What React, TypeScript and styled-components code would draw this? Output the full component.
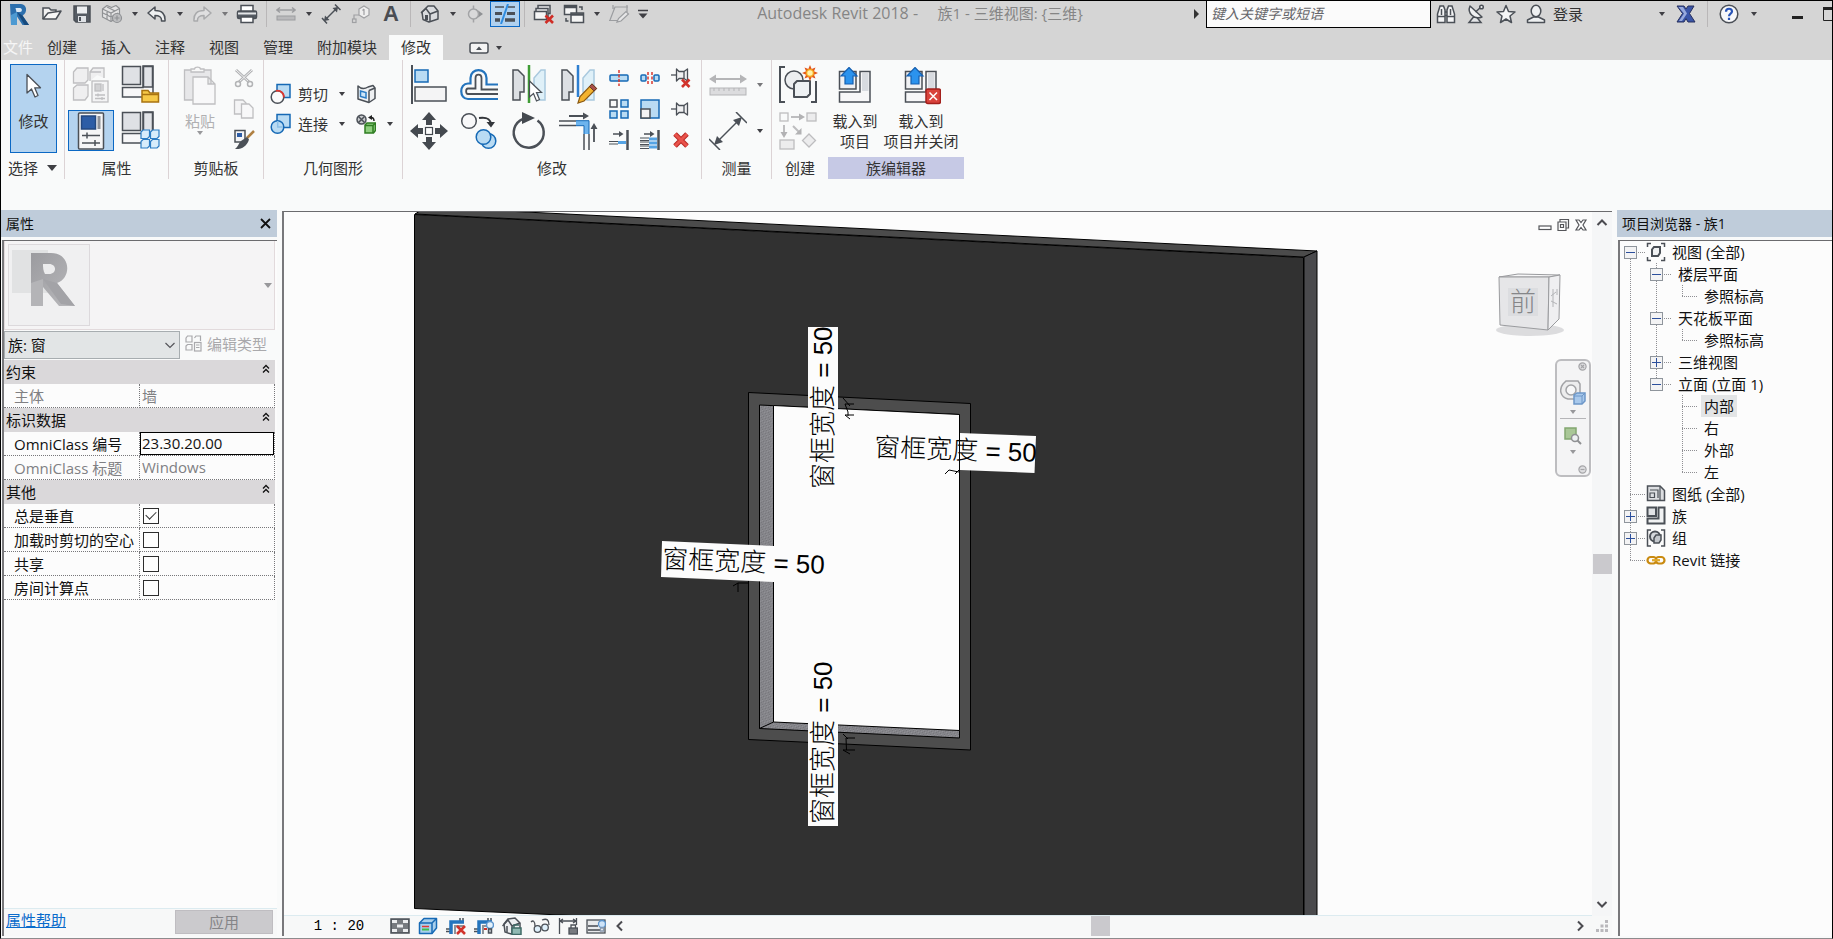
import React, { ReactNode, useState } from "react";
import styled, { createGlobalStyle, css } from "styled-components";

const ui = `"Open Sans", "Noto Sans CJK SC", sans-serif`;
const DARK = "#4b5057";
const BLUE = "#1669b5";
const SKY = "#b9dbf3";
const OFF = "#bfbfc1";

const GlobalStyle = createGlobalStyle`
  *, *::before, *::after { box-sizing: border-box; }
  body { margin: 0; background: #fbfbfb; }
  button, input, select { font: inherit; color: inherit; margin: 0; }
  button { padding: 0; border: 0; background: none; cursor: pointer; }
  svg { display: block; flex: none; }
`;

const Window = styled.div`
  display: flex;
  flex-direction: column;
  min-height: 100vh;
  border: 1px solid #000;
  border-bottom-color: #8d8b8d;
  padding-bottom: 2px;
  background: #f9fafa;
  color: #333;
  font: 15px/20px ${ui};
`;

/* ---------- title bar ---------- */

const TitleBar = styled.header`
  display: flex;
  align-items: flex-start;
  height: 34px;
  overflow: hidden;
  background: #d5d5d5;
`;

const Tool = styled.button<{ $w?: number; $on?: boolean }>`
  display: flex;
  flex: none;
  align-items: center;
  justify-content: center;
  width: ${(p) => p.$w ?? 30}px;
  height: 26px;
  ${(p) =>
    p.$on &&
    css`
      background: #b0d1ef;
      border: 1px solid #0b68c4;
    `}
`;

const MinimizeTool = styled(Tool)`
  padding-left: 8px;
`;

const Divider = styled.span`
  flex: none;
  width: 1px;
  height: 26px;
  margin: 0 4px;
  background: #b9b7b8;
`;

const Caret = styled.span<{ $size?: number; $color?: string }>`
  flex: none;
  width: 0;
  height: 0;
  border: ${(p) => p.$size ?? 3}px solid transparent;
  border-top: ${(p) => (p.$size ?? 3) + 1}px solid ${(p) => p.$color ?? "#3f3f44"};
  border-bottom: 0;
`;

const DocTitle = styled.h1`
  flex: 1;
  min-width: 0;
  margin: 0;
  overflow: hidden;
  color: #858585;
  font: 15px/25px ${ui};
  text-align: center;
  white-space: pre;
`;

const ProductName = styled.span`
  font-size: 16px;
`;

const Search = styled.input`
  flex: none;
  width: 225px;
  height: 27px;
  padding: 0 4px 2px;
  border: 1px solid #000;
  border-top: 0;
  background: #fbfbfb;
  font: italic 14px/24px ${ui};
  &::placeholder { color: #66666a; opacity: 1; }
`;

const Login = styled.button`
  display: flex;
  flex: none;
  align-items: center;
  justify-content: space-between;
  width: 118px;
  height: 26px;
  padding: 0 4px 0 2px;
`;

/* ---------- tabs ---------- */

const TabBar = styled.nav`
  display: flex;
  height: 25px;
  background: #d5d5d5;
`;

const Tab = styled.button<{ $active?: boolean; $file?: boolean }>`
  padding: 0 ${(p) => (p.$file ? 2 : 12)}px;
  line-height: 25px;
  white-space: nowrap;
  color: ${(p) => (p.$file ? "#f6f6f6" : "#333")};
  background: ${(p) => (p.$active ? "#f9fafa" : "none")};
`;

const TabTools = styled.button`
  display: flex;
  align-items: center;
  gap: 7px;
  margin-left: 26px;
`;

/* ---------- ribbon ---------- */

const Ribbon = styled.div`
  display: flex;
  flex: none;
  height: 150px;
`;

const PanelBox = styled.section<{ $w: number; $line?: boolean }>`
  display: flex;
  flex: none;
  flex-direction: column;
  width: ${(p) => p.$w}px;
  height: 119px;
  padding-top: 1px;
  border-right: ${(p) => (p.$line ? "1px solid #dcd3d5" : "0")};
`;

const PanelBody = styled.div<{ $pad?: number }>`
  display: flex;
  flex: 1;
  align-items: flex-start;
  padding: 3px 0 0 ${(p) => p.$pad ?? 3}px;
`;

const PanelLabel = styled.h2<{ $tint?: boolean }>`
  display: flex;
  align-items: center;
  justify-content: center;
  gap: 9px;
  height: 22px;
  margin: 0;
  background: ${(p) => (p.$tint ? "#c6c9e5" : "none")};
  font: 15px/22px ${ui};
`;

const BigGrid = styled.div<{ $cols: number; $gap?: number }>`
  display: grid;
  grid-template-columns: repeat(${(p) => p.$cols}, 46px);
  grid-auto-rows: 41px;
  gap: 5px ${(p) => p.$gap ?? 3}px;
`;

const SmallGrid = styled.div<{ $cols: number; $left: number }>`
  display: grid;
  grid-template-columns: repeat(${(p) => p.$cols}, 28px);
  grid-auto-rows: 28px;
  gap: 3px;
  margin-left: ${(p) => p.$left}px;
`;

const IconButton = styled.button<{ $on?: boolean }>`
  display: flex;
  align-items: center;
  justify-content: center;
  ${(p) =>
    p.$on &&
    css`
      background: #b4d3ef;
      border: 1px solid #0b68c4;
    `}
`;

const TallButton = styled.button<{ $w: number; $on?: boolean; $off?: boolean }>`
  display: flex;
  flex: none;
  flex-direction: column;
  align-items: center;
  width: ${(p) => p.$w}px;
  height: 89px;
  color: ${(p) => (p.$off ? "#b0b0b2" : "#333")};
  ${(p) =>
    p.$on &&
    css`
      background: #b4d3ef;
      outline: 1px solid #0b68c4;
      outline-offset: -1px;
    `}
`;

const TallIcon = styled.span`
  display: flex;
  align-items: center;
  height: 43px;
  margin-bottom: 4px;
`;

const GeometryRows = styled.div`
  padding-top: 15px;
`;

const GeometryRow = styled.div`
  display: flex;
  align-items: center;
  height: 30px;
`;

const TextTool = styled.button`
  display: flex;
  align-items: center;
  gap: 6px;
  width: 66px;
`;

const CaretColumn = styled.div`
  display: grid;
  grid-auto-rows: 41px;
  gap: 5px;
  width: 18px;
`;

/* ---------- work area ---------- */

const Work = styled.div`
  display: flex;
  flex: 1;
  gap: 5px;
  min-height: 0;
`;

const Palette = styled.aside<{ $w: number }>`
  display: flex;
  flex: none;
  flex-direction: column;
  gap: 3px;
  width: ${(p) => p.$w}px;
`;

const PaletteTitle = styled.h2`
  display: flex;
  align-items: center;
  justify-content: space-between;
  height: 27px;
  margin: 0;
  padding: 0 6px 0 5px;
  background: #bfccda;
  color: #111;
  font: 14px/27px ${ui};
`;

const PaletteBody = styled.div`
  display: flex;
  flex: 1;
  flex-direction: column;
  margin-left: 1px;
  border-top: 1px solid #6b6b6e;
  border-left: 2px solid #78787b;
  background: #fcfcfc;
  color: #111;
`;

const TypePreview = styled.button`
  display: flex;
  align-items: center;
  justify-content: space-between;
  height: 89px;
  margin-right: 2px;
  padding: 0 2px 0 3px;
  border: 1px solid #e2dadc;
  border-top: 0;
  background: #f5f4f5;
`;

const Thumb = styled.span`
  display: flex;
  align-items: flex-start;
  width: 82px;
  height: 82px;
  border: 1px solid #dcd9dc;
  background: #f0f0f1;
`;

const TypeRow = styled.div`
  display: flex;
  align-items: center;
  height: 30px;
  background: #f9fafa;
`;

const SelectWrap = styled.label`
  display: grid;
  align-items: center;
  width: 176px;
  height: 28px;
  & > * { grid-area: 1 / 1; }
  & > svg { justify-self: end; margin-right: 4px; pointer-events: none; }
`;

const TypeSelect = styled.select`
  appearance: none;
  width: 100%;
  height: 28px;
  padding: 0 20px 0 3px;
  border: 1px solid #a7adb0;
  border-radius: 0;
  background: #e2e5e6;
`;

const EditType = styled.button`
  display: flex;
  align-items: center;
  gap: 5px;
  margin-left: 5px;
  padding-bottom: 3px;
  color: #a9a9ac;
`;

const PropTable = styled.table`
  width: calc(100% - 2px);
  border-collapse: separate;
  border-spacing: 0;
  table-layout: fixed;
  line-height: 20px;
  td, th { height: 24px; padding: 0; font-weight: 400; text-align: left; white-space: nowrap; }
`;

const GroupCell = styled.th`
  background: #dad8da;
`;

const GroupButton = styled.button`
  display: flex;
  align-items: center;
  justify-content: space-between;
  width: 100%;
  height: 24px;
  padding: 0 5px 0 2px;
  & > svg { margin-bottom: 6px; }
`;

const NameCell = styled.th<{ $off?: boolean }>`
  border-right: 1px dotted #77777a;
  border-bottom: 1px dotted #77777a;
  color: ${(p) => (p.$off ? "#808083" : "#111")};
  & > label { padding-left: 10px; }
`;

const ValueCell = styled.td<{ $off?: boolean }>`
  border-right: 1px dotted #77777a;
  border-bottom: 1px dotted #77777a;
  color: ${(p) => (p.$off ? "#808083" : "#111")};
`;

const ValueInput = styled.input<{ $boxed?: boolean }>`
  display: block;
  width: 100%;
  height: 23px;
  padding: 0 1px 1px;
  border: 1px solid ${(p) => (p.$boxed ? "#000" : "transparent")};
  background: transparent;
  border-radius: 0;
`;

const Tick = styled.input`
  display: grid;
  place-items: center;
  appearance: none;
  width: 16px;
  height: 16px;
  margin: 0 3px;
  border: 1px solid #2c2c2c;
  background: #fdfdfd;
  &:checked::before {
    content: "";
    width: 10px;
    height: 6px;
    margin-bottom: 3px;
    border: solid #333;
    border-width: 0 0 1px 1px;
    transform: rotate(-45deg);
  }
`;

const PaletteFooter = styled.div`
  display: flex;
  align-items: flex-start;
  justify-content: space-between;
  height: 28px;
  margin-top: auto;
  padding: 1px 4px 0 2px;
  background: #f7f8f8;
  border-top: 1px solid #dcebf0;
`;

const HelpLink = styled.a`
  color: #0a6bcb;
`;

const Apply = styled.button`
  width: 98px;
  height: 24px;
  border: 1px solid #bfbdc1;
  background: #cbcacd;
  color: #858588;
`;

/* ---------- drawing view ---------- */

const ViewFrame = styled.main`
  display: grid;
  flex: 1;
  grid-template-columns: minmax(0, 1fr) 20px;
  grid-template-rows: minmax(0, 1fr) 20px;
  min-width: 0;
  margin-top: 1px;
  border-top: 1px solid #6b6b6e;
  border-left: 2px solid #78787b;
`;

const Canvas = styled.div`
  position: relative;
  overflow: hidden;
  background: #fcfcfc;
  border-bottom: 1px solid #dcebf0;
`;

const Scene = styled.svg`
  position: absolute;
  inset: 0;
  width: 100%;
  height: 100%;
`;

const ViewButtons = styled.div`
  position: absolute;
  top: 6px;
  right: 2px;
  display: flex;
  & > button { display: flex; justify-content: center; width: 18px; }
`;

const CubeSpot = styled.button`
  position: absolute;
  top: 53px;
  right: 24px;
`;

const NavBar = styled.div`
  position: absolute;
  top: 147px;
  right: 1px;
  display: flex;
  flex-direction: column;
  align-items: center;
  width: 36px;
  height: 118px;
  border: 2px solid #bdbdc0;
  border-radius: 6px;
  background: #f4f4f5;
`;

const NavCorner = styled.button`
  align-self: flex-end;
  margin: 1px 2px 0 0;
`;

const NavTool = styled.button<{ $line?: boolean }>`
  display: flex;
  flex-direction: column;
  align-items: center;
  gap: 5px;
  width: 26px;
  padding: ${(p) => (p.$line ? "8px 0 4px" : "8px 0 10px")};
  border-bottom: ${(p) => (p.$line ? "1px solid #b5b5b8" : "0")};
`;

const ScrollColumn = styled.div`
  display: flex;
  flex-direction: column;
  align-items: center;
  justify-content: space-between;
  padding: 5px 0 6px;
  background: #f5f6f7;
`;

const Thumbpad = styled.span`
  width: 19px;
  height: 20px;
  background: #cac9cd;
`;

const StatusBar = styled.div`
  display: flex;
  align-items: center;
  background: #f7f8f8;
`;

const Scale = styled.button`
  width: 76px;
  margin: 0 9px 0 17px;
  color: #000;
  font: 14px/18px "Liberation Mono", "Noto Sans CJK SC", monospace;
`;

const StatusTool = styled.button`
  display: flex;
  justify-content: center;
  width: 28px;
`;

const ScrollRow = styled.div`
  display: flex;
  flex: 1;
  align-items: center;
  justify-content: space-between;
  padding: 0 6px 0 4px;
`;

const Grip = styled.div`
  display: flex;
  align-items: center;
  justify-content: center;
  background: #f7f8f8;
`;

/* ---------- project tree ---------- */

const Tree = styled.ul`
  margin: 0;
  padding: 0;
  list-style: none;
`;

const TreeRow = styled.li`
  display: flex;
  align-items: center;
  height: 22px;
`;

type GuideKind = "none" | "line" | "tee" | "end" | "start";

const dotsDown = "repeating-linear-gradient(180deg, #8f8f93 0 1px, transparent 1px 2px)";
const dotsAcross = "repeating-linear-gradient(90deg, #8f8f93 0 1px, transparent 1px 2px)";
const guides: Record<GuideKind, string> = {
  none: "none",
  line: `${dotsDown} 10px 0 / 1px 22px no-repeat`,
  tee: `${dotsDown} 10px 0 / 1px 22px no-repeat, ${dotsAcross} 10px 11px / 16px 1px no-repeat`,
  end: `${dotsDown} 10px 0 / 1px 12px no-repeat, ${dotsAcross} 10px 11px / 16px 1px no-repeat`,
  start: `${dotsDown} 10px 12px / 1px 10px no-repeat, ${dotsAcross} 10px 11px / 16px 1px no-repeat`,
};

const Guide = styled.span<{ $kind: GuideKind }>`
  display: flex;
  flex: none;
  align-items: center;
  width: 26px;
  height: 22px;
  padding-left: 4px;
  background: ${(p) => guides[p.$kind]};
`;

const Expander = styled.button`
  display: grid;
  place-items: center;
  width: 13px;
  height: 13px;
  border: 1px solid #8f959c;
  background: #f3f3f4;
`;

const TreeLabel = styled.a<{ $on?: boolean }>`
  margin-left: 3px;
  padding: 0 3px;
  background: ${(p) => (p.$on ? "#e3e5e6" : "none")};
  color: #111;
  text-decoration: none;
  line-height: 22px;
  white-space: nowrap;
`;

/* ---------- icons ---------- */

const Ico = ({ w, h, children, c = DARK, s = 1.5 }: { w: number; h: number; children: ReactNode; c?: string; s?: number }) => (
  <svg width={w} height={h} viewBox={`0 0 ${w} ${h}`} fill="none" stroke={c} strokeWidth={s} aria-hidden="true">
    {children}
  </svg>
);

const LogoR = () => (
  <Ico w={20} h={24} s={0}>
    <path d="M1 2 L12 2 C18 2 19 11 13.5 13.5 L20 23 H13.5 L8 14.5 V23 H2Z" fill="#2c6fad" />
    <path d="M6.5 6 H11 C13.5 6 13.5 10 11 10 H7.5Z" fill="#dbe9f5" />
    <path d="M2 13 L8 10 V23 H2Z" fill="#4d9ad2" />
    <path d="M8 10 L13.5 13.5 L20 23 H15.5Z" fill="#174a7d" />
  </Ico>
);

const OpenIcon = () => (
  <Ico w={22} h={20}>
    <path d="M2 15 V4 H8 L10 6 H15 V9" fill="#f2f2f2" />
    <path d="M2 15 L7 9 L20 7 L15 15Z" fill="#f7f7f7" strokeLinejoin="round" />
  </Ico>
);

const SaveIcon = () => (
  <Ico w={20} h={20}>
    <path d="M2 2 H18 V18 H4 L2 16Z" fill="#555b63" />
    <rect x="5" y="2.5" width="10" height="7" fill="#eceef0" stroke="none" />
    <rect x="6" y="12" width="8" height="6" fill="#dfe2e6" stroke="none" />
    <rect x="7" y="13" width="2" height="4" fill={DARK} stroke="none" />
  </Ico>
);

const SyncIcon = () => (
  <Ico w={22} h={20} c="#8f9194" s={1.2}>
    <path d="M1.5 5 L6 1.5 L10.5 3.5 L15 1.500 L18.500 4.500 V12 L10 17.500 L1.500 13Z" fill="#e3e3e4" strokeLinejoin="round" />
    <path d="M1.5 5 L10 9 L18.5 4.500 M10 9 V17 M6 3 L14 7 M6 7 V15 M2 9 L10 13 L17 9" />
    <circle cx="16" cy="14" r="4.5" fill="#bdbec0" />
    <path d="M13.5 14 H18.5 M16 11.5 V16.5" />
  </Ico>
);

const UndoIcon = ({ flip }: { flip?: boolean }) => (
  <Ico w={20} h={18} c={flip ? "#a9aaac" : DARK}>
    <path
      transform={flip ? "translate(20 0) scale(-1 1)" : undefined}
      d="M1 8 L8 2 V5.5 C15 5.5 18.5 9 18 16 H14.5 C15 12 12 10.5 8 10.5 V14Z"
      fill={flip ? "#dfdfe0" : "#eef0f1"}
      strokeLinejoin="round"
    />
  </Ico>
);

const PrintIcon = () => (
  <Ico w={22} h={20}>
    <path d="M5 7 V1.5 H17 V7" fill="#fff" />
    <rect x="1.5" y="7" width="19" height="7.5" rx="1.5" fill="#555b63" />
    <path d="M2 9.5 H20" stroke="#e4e6e8" strokeWidth="2" />
    <path d="M5 13 H17 V18.5 H5Z" fill="#fff" />
  </Ico>
);

const RulerIcon = () => (
  <Ico w={20} h={16} c="#9c9da0">
    <path d="M1 4 H19 M4 1.5 L1 4 L4 6.5 M16 1.5 L19 4 L16 6.5" />
    <rect x="1" y="10" width="18" height="4" fill="#b9b9bb" strokeWidth="1" />
  </Ico>
);

const DimIcon = () => (
  <Ico w={20} h={20}>
    <path d="M4 16 L16 4" />
    <path d="M3 17 L4 11.5 L8.5 16Z M17 3 L16 8.5 L11.5 4Z" fill={DARK} stroke="none" />
    <path d="M1 14 L6 19.5 M14 0.5 L19.5 6" />
  </Ico>
);

const TagIcon = () => (
  <Ico w={20} h={20} c="#9fa0a3" s={1.2}>
    <path d="M8 5 L13 2 L18 5 V11 L13 14 L8 11Z" fill="#efefef" />
    <path d="M13 5 V11 M11.5 6.5 L13 5 M8 11 H3 V15" />
    <rect x="1.5" y="15" width="3.5" height="3.5" />
  </Ico>
);

const LetterA = styled.span`
  color: #4a4d52;
  font: 700 22px/24px "Liberation Sans", sans-serif;
`;

const HouseIcon = () => (
  <Ico w={20} h={20}>
    <path d="M2 8 L8 2 L14 2 L18 7 V15 L9 18 L3 15.5Z" fill="#d9dbde" strokeLinejoin="round" />
    <path d="M1 9 L6 4.5 L10 10 L18 7 M10 10 V17.5" />
    <rect x="5" y="11" width="3" height="5" fill={DARK} stroke="none" />
  </Ico>
);

const SectionIcon = () => (
  <Ico w={18} h={18} c="#a3a4a6">
    <path d="M10 4 L17 9 L10 14Z" fill="#8f9194" stroke="none" />
    <circle cx="7.5" cy="9" r="5" fill="#d9d9da" />
    <path d="M7.5 0.5 V4 M7.5 14 V17.5" />
  </Ico>
);

const ThinLinesIcon = () => (
  <Ico w={22} h={20}>
    <path d="M1 3 H10 M14 3 H21" strokeWidth="1.5" />
    <path d="M1 9.5 H8 M13 9.5 H21" strokeWidth="3" />
    <path d="M1 16 H6 M11 16 H21" strokeWidth="3.5" />
    <path d="M7 20 L14 0" stroke="#2e8ce0" strokeWidth="2" />
  </Ico>
);

const CloseWindowsIcon = () => (
  <Ico w={22} h={20}>
    <rect x="5" y="1.5" width="12" height="8" fill="#e9e9ea" />
    <rect x="3" y="4.5" width="12" height="8" fill="#e9e9ea" />
    <rect x="1.5" y="7.5" width="12" height="8" fill="#f5f5f5" />
    <path d="M12.5 11.5 L20 19 M20 11.5 L12.5 19" stroke="#cf2d26" strokeWidth="2.6" />
  </Ico>
);

const SwitchWindowsIcon = () => (
  <Ico w={22} h={20}>
    <rect x="1.5" y="1.5" width="12" height="9" fill="#f5f5f5" />
    <path d="M1.5 3 H13.5" strokeWidth="2.5" />
    <rect x="8" y="9" width="12.5" height="9.5" fill="#f5f5f5" />
    <path d="M8 10.5 H20.5" strokeWidth="2.5" />
    <path d="M16 3 H19 V6 M5.5 17 H3 V14" />
  </Ico>
);

const EditPlaneIcon = () => (
  <Ico w={22} h={20} c="#9b9da0" s={1.2}>
    <path d="M2 16 L7 3 H20 M1 16.5 H11 M5 1 V5 M19 1 V8" />
    <path d="M9 18 L10.5 14.5 L18 7.5 L20.5 10 L13 17Z" fill="#e6e6e7" />
  </Ico>
);

const CustomiseIcon = () => (
  <Ico w={12} h={12} c="#3f3f44">
    <path d="M1 2.5 H11" />
    <path d="M1.5 5.5 H10.5 L6 10.5Z" fill="#3f3f44" stroke="none" />
  </Ico>
);

const BinocularIcon = () => (
  <Ico w={20} h={20}>
    <path d="M1.5 18.5 V10 L4 2 H7.5 L9 6 V18.5Z M18.5 18.5 V10 L16 2 H12.5 L11 6 V18.5Z" fill="#f4f5f6" />
    <path d="M9 8 H11 M9 11.5 H11 M1.5 12.5 H9 M11 12.5 H18.5 M5.5 5 V11 M14.5 5 V11" />
  </Ico>
);

const DishIcon = () => (
  <Ico w={20} h={20}>
    <path d="M7.5 13 L3 18.5 H15 L11 13.5Z" fill="#e4e6e8" />
    <path d="M4 2 C1 9 8 16 16 13Z" fill="#f1f2f3" strokeLinejoin="round" />
    <path d="M9.5 8 L15 3" />
    <circle cx="15.5" cy="3" r="1.8" fill="#f1f2f3" />
  </Ico>
);

const StarIcon = () => (
  <Ico w={20} h={20}>
    <path d="M10 1.5 L12.5 7.5 L19 8 L14 12 L15.5 18.5 L10 15 L4.5 18.5 L6 12 L1 8 L7.5 7.5Z" fill="#f4f5f6" strokeLinejoin="round" />
  </Ico>
);

const UserIcon = () => (
  <Ico w={20} h={20}>
    <path d="M1.5 18.5 V16 L7.5 13 H12.5 L18.5 16 V18.5Z" fill="#eef0f1" strokeLinejoin="round" />
    <ellipse cx="10" cy="7" rx="4.8" ry="5.8" fill="#eef0f1" />
  </Ico>
);

const ExchangeIcon = () => (
  <Ico w={20} h={18} s={1} c="#27305e">
    <path d="M1 1 H8 L10 4 L12 1 H18 L13.5 8.5 L19 17 H12 L10 13.5 L8 17 H1 L6.5 8.5Z" fill="#3a55a8" />
    <path d="M2.5 2 H7 L11 8.5 L6 16 H3 L8 8.5Z" fill="#98aadd" stroke="none" />
  </Ico>
);

const HelpIcon = () => (
  <Ico w={20} h={20}>
    <circle cx="10" cy="10" r="8.8" fill="#f7f8fa" />
    <path d="M7 7.8 C7 3.8 13 3.8 13 7.5 C13 9.8 10 9.5 10 12.3 M10 13.8 V16" stroke="#2a55b8" strokeWidth="2.2" />
  </Ico>
);

const PointerIcon = () => (
  <Ico w={18} h={26} s={1.3}>
    <path d="M2 1.5 V20 L6.5 16 L10 24 L13 22.5 L9.7 14.8 H15.5Z" fill="#fff" strokeLinejoin="round" />
  </Ico>
);

const TypesOffIcon = () => (
  <Ico w={38} h={38} c={OFF} s={1.3}>
    <path d="M1.5 6 L5 2 H16 V14 L13 17 H1.5Z M18 6 L21 2 H32 V12 M18 15 V6 H29 M1.5 22 L5 19 H16 V30 L13 34 H1.5Z" fill="#efeff0" />
    <rect x="20" y="15" width="16" height="21" fill="#f4f4f5" />
    <rect x="23" y="18" width="6" height="7" fill="#d2d2d4" />
    <path d="M31 18 V25 M23 29 H33 M23 32.5 H33 M26 27.5 V30.5 M30 31 V34" />
  </Ico>
);

const FamilyBase = () => (
  <g>
    <rect x="1.5" y="1.5" width="18" height="18" fill="#dfe1e5" />
    <path d="M22 1 V22.5 H1.5 V32 H32 V1Z" fill="#f7f7f8" />
    <path d="M22.5 1.5 H31.5 V22 H22.5Z" fill="#e1e3e7" />
  </g>
);

const FamilyCategoryIcon = () => (
  <Ico w={39} h={39}>
    <FamilyBase />
    <path d="M21 37 V25.5 H27 L29 28 H37.5 V37Z" fill="#f6c948" stroke="#a87310" />
    <path d="M21 29.5 H37" stroke="#a87310" />
  </Ico>
);

const PropertiesIcon = () => (
  <Ico w={28} h={38}>
    <rect x="1.5" y="1" width="25" height="36" rx="1" fill="#f5f5f6" />
    <rect x="4.5" y="4" width="14" height="13" fill="#2d5da6" stroke="#24487f" />
    <path d="M22 4 V17" stroke="#8f9299" strokeWidth="3" />
    <path d="M5 23.5 H23 M5 31 H23 M10 20.5 V26.5 M18 28 V34" />
  </Ico>
);

const FamilyTypesIcon = () => (
  <Ico w={39} h={39}>
    <FamilyBase />
    {[[20, 19], [29.5, 19], [20, 28.5], [29.5, 28.5]].map(([x, y]) => (
      <path key={`${x}-${y}`} d={`M${x} ${y + 2} L${x + 2} ${y} H${x + 8.5} V${y + 6.5} L${x + 6.5} ${y + 8.5} H${x}Z`} fill="#d7ecfb" stroke="#2b7cc4" strokeWidth="1.2" />
    ))}
  </Ico>
);

const PasteIcon = () => (
  <Ico w={34} h={39} c={OFF} s={1.3}>
    <path d="M1.5 4 H28 V34 H1.5Z" fill="#e7e7e9" />
    <path d="M8 6 V3 H11.5 C12 0.5 17 0.5 17.5 3 H21 V6Z" fill="#f8f8f8" />
    <path d="M10 11 H25 L32 18 V38 H10Z M25 11 V18 H32" fill="#f8f8f9" />
  </Ico>
);

const ScissorsIcon = () => (
  <Ico w={20} h={20} c="#b3b4b6">
    <path d="M2 2 L15 14 M18 2 L5 14" strokeWidth="3" />
    <path d="M2 2 L15 14 M18 2 L5 14" stroke="#f1f1f2" strokeWidth="1" />
    <circle cx="4" cy="16" r="2.5" />
    <circle cx="16" cy="16" r="2.5" />
  </Ico>
);

const CopyClipIcon = () => (
  <Ico w={22} h={22} c={OFF} s={1.3}>
    <path d="M1.5 2 H10 L13 5 V16 H1.5Z" fill="#f4f4f5" />
    <path d="M8.5 6 H16 L20 10 V20 H8.5Z" fill="#f8f8f9" />
  </Ico>
);

const MatchIcon = () => (
  <Ico w={22} h={22}>
    <path d="M2 1.5 H12 V13 H2Z" fill="#f4f4f6" />
    <rect x="4" y="4" width="5" height="4" fill="#2d5da6" stroke="none" />
    <path d="M21 2 L14 9" stroke="#b08042" strokeWidth="2.5" />
    <path d="M14 8 L16 10.5 C14 17 9 20.5 2 20 C5 18 5 15 8 12Z" fill={DARK} stroke="none" />
  </Ico>
);

const CutIcon = () => (
  <Ico w={22} h={22} c={BLUE}>
    <rect x="7" y="1.5" width="13" height="13" fill={SKY} />
    <circle cx="7.5" cy="14" r="6.3" fill="#fbfbfb" stroke={DARK} />
    <path d="M6 7.8 A6.3 6.3 0 0 1 13.8 14.5" stroke="#e0352e" strokeWidth="1.8" />
  </Ico>
);

const JoinIcon = () => (
  <Ico w={22} h={22} c={BLUE}>
    <rect x="7" y="1.5" width="13" height="13" fill={SKY} />
    <circle cx="7.5" cy="14" r="6.3" fill={SKY} />
    <path d="M7.7 8 V14 H13" stroke="#8cc0e8" />
  </Ico>
);

const WallJoinIcon = () => (
  <Ico w={20} h={20}>
    <path d="M2 2 C5 5 9 5 12 3 L17 1.500 L19 4 V14.500 L13 18.500 L2 15Z" fill="#eef0f2" strokeLinejoin="round" />
    <path d="M13 6.5 V18 M13 6.5 L19 4" />
    <path d="M4.5 7 L10 8.5 V14 L4.5 12.5Z" fill="#cfe6f8" stroke="#2b7cc4" />
  </Ico>
);

const PaintIcon = () => (
  <Ico w={20} h={20}>
    <circle cx="5.5" cy="5.5" r="4.5" fill="#c7c9cc" />
    <path d="M2.5 2.5 L8.5 8.5 M8.5 2.5 L2.5 8.5" />
    <path d="M12 3.5 L16 1 V6Z" fill="#222" stroke="none" />
    <path d="M15 3.5 C17.5 3.5 18 5 18 7" stroke="#222" />
    <path d="M9 11 L11 9 H19.5 V16.5 L17.5 19 H9Z" fill="#8fce7f" stroke="#2f7d22" />
    <path d="M9 11.5 H17 V19 M17 11.5 L19.5 9" stroke="#2f7d22" />
  </Ico>
);

const AlignIcon = () => (
  <Ico w={38} h={40}>
    <path d="M2 0 V39" strokeWidth="2" />
    <rect x="5" y="5" width="13" height="12" fill={SKY} stroke={BLUE} />
    <rect x="5" y="22" width="31" height="14" fill="#f4f4f5" />
  </Ico>
);

const OffsetIcon = () => (
  <Ico w={40} h={36} s={1.8}>
    <path d="M39 17.5 H27.5 V11 C27.5 0.5 11.500 0.5 11.500 11 V16.500 H9 C0 16.500 0 32 9 32 H39" stroke="#2474bd" strokeWidth="2.2" />
    <path d="M39 22.5 H22.5 V11 C22.5 6.5 16.5 6.5 16.5 11 V21.5 H9 C6.500 21.500 6.500 27 9 27 H39" />
  </Ico>
);

const mirrorLeft = "M2 5 H7 L13 11 V27 H9 V35 H2Z";
const mirrorRight = "M34 5 H30 L23 13 V27 H27 V35 H34Z";

const MirrorPickIcon = () => (
  <Ico w={36} h={40}>
    <path d={mirrorLeft} fill="#dcdfe3" />
    <path d={mirrorRight} fill="#dff0f8" stroke="#a9c9de" />
    <path d="M18 0 V38" stroke="#3f9c35" strokeWidth="2.5" />
    <path d="M18.5 16 V32 L22.5 28.5 L25.5 36 L28.5 34.5 L25.5 27.5 H30.5Z" fill="#fff" strokeWidth="1.2" />
  </Ico>
);

const MirrorDrawIcon = () => (
  <Ico w={38} h={40}>
    <path d={mirrorLeft} fill="#dcdfe3" />
    <path d={mirrorRight} fill="#dff0f8" stroke="#a9c9de" />
    <path d="M18 0 V32" stroke="#2e7fd0" strokeWidth="2.5" />
    <path d="M18 38 L20 31.5 L32 19 L36.5 23.5 L24 36Z" fill="#f3b32f" stroke="#8b5a12" strokeWidth="1.2" />
    <path d="M32 19 L36.5 23.5 L34 26 L29.5 21.5Z" fill="#a7504a" stroke="#6b3a2a" strokeWidth="1" />
  </Ico>
);

const MoveIcon = () => (
  <Ico w={38} h={38} s={0}>
    <path fill="#44494f" d="M19 0 L26 8 H22 V13 H16 V8 H12Z M19 38 L26 30 H22 V25 H16 V30 H12Z M0 19 L8 12 V16 H13 V22 H8 V26Z M38 19 L30 12 V16 H25 V22 H30 V26Z" />
    <rect x="15.5" y="15.5" width="7" height="7" fill="#fff" stroke="#44494f" strokeWidth="1.2" />
  </Ico>
);

const CopyIcon = () => (
  <Ico w={38} h={38}>
    <circle cx="9" cy="9" r="7.3" fill="#f8f8f9" />
    <path d="M19 6 C26 5 30 6 31 12" stroke="#33363b" strokeWidth="2" />
    <path d="M26.5 10 L35 10 L31 15.5Z" fill="#33363b" stroke="none" />
    <circle cx="28.5" cy="29" r="7.3" fill={SKY} stroke={BLUE} />
    <circle cx="23.5" cy="25" r="7.3" fill={SKY} stroke={BLUE} />
  </Ico>
);

const RotateIcon = () => (
  <Ico w={38} h={40} s={2.5}>
    <path d="M27.5 9.5 A15 15 0 1 1 13 7.8" />
    <path d="M12 1 L25 7 L12 13Z" fill="#44494f" stroke="none" />
  </Ico>
);

const TrimIcon = () => (
  <Ico w={40} h={38}>
    <path d="M10 4 H26 M35 13 V30" strokeWidth="1.8" />
    <path d="M24 0.5 L30 4 L24 7.5Z M31.5 17 H38.5 L35 11Z" fill={DARK} stroke="none" />
    <path d="M0 9 H17 M0 13.5 H17 M25 22 V38 M30 22 V38" />
    <path d="M17 11.2 H27.5 V22" stroke="#6db4ee" strokeWidth="5" />
    <path d="M17 8.7 H30 V22 M17 13.7 H25 V22" stroke={BLUE} strokeWidth="1" />
  </Ico>
);

const SplitIcon = ({ gap }: { gap?: boolean }) => (
  <Ico w={20} h={18} c={BLUE}>
    {gap ? (
      <>
        <rect x="1" y="6" width="5" height="6" rx="1" fill={SKY} />
        <rect x="14" y="6" width="5" height="6" rx="1" fill={SKY} />
        <path d="M8 3 V15 M12 3 V15" stroke="#d9382f" strokeDasharray="3 1.5" />
      </>
    ) : (
      <>
        <rect x="1" y="6" width="18" height="6" rx="1" fill={SKY} />
        <path d="M10 1 V17" stroke="#d9382f" strokeDasharray="3 1.5" />
      </>
    )}
  </Ico>
);

const PinIcon = ({ off }: { off?: boolean }) => (
  <Ico w={20} h={22} s={1.3}>
    <g transform={off ? "translate(0 -3)" : undefined}>
      <path d="M0 11 H5" />
      <path d="M5.5 5 L8 7.5 H13 L16.5 5 V17 L13 14.5 H8 L5.5 17Z" fill="#f1f1f2" strokeLinejoin="round" />
      <path d="M13 7.5 V14.5" />
    </g>
    {off && <path d="M11 12.5 L18.5 20 M18.5 12.5 L11 20" stroke="#d1332b" strokeWidth="2.6" />}
  </Ico>
);

const ArrayIcon = () => (
  <Ico w={20} h={20} c={BLUE}>
    <rect x="1" y="1" width="7" height="7" fill="#f8f8f8" stroke={DARK} />
    <rect x="12" y="1" width="7" height="7" fill={SKY} />
    <rect x="1" y="12" width="7" height="7" fill={SKY} />
    <rect x="12" y="12" width="7" height="7" fill={SKY} />
  </Ico>
);

const ScaleIcon = () => (
  <Ico w={20} h={20} c={BLUE}>
    <rect x="1" y="1" width="18" height="18" fill={SKY} />
    <rect x="1" y="10" width="9" height="9" fill="#f3f3f4" stroke={DARK} />
  </Ico>
);

const ExtendIcon = ({ many }: { many?: boolean }) => (
  <Ico w={20} h={20}>
    <path d="M18.5 0 V20" strokeWidth="2.5" />
    <path d="M4 4 H11" />
    <path d="M10 1 L14.5 4 L10 7Z" fill={DARK} stroke="none" />
    {(many ? [9, 13, 17] : [12.5]).map((y) => (
      <g key={y}>
        <path d={`M0 ${y - 1} H9 M0 ${y + 1.5} H9`} strokeWidth="1.2" />
        <path d={`M9 ${y} H17`} stroke="#55a3e4" strokeWidth="3" />
      </g>
    ))}
  </Ico>
);

const DeleteIcon = () => (
  <Ico w={18} h={18}>
    <path d="M3 3 L15 15 M15 3 L3 15" stroke="#b92a24" strokeWidth="5" />
    <path d="M3 3 L15 15 M15 3 L3 15" stroke="#e9534b" strokeWidth="3" />
  </Ico>
);

const MeasureOffIcon = () => (
  <Ico w={38} h={24} c="#b5b5b7">
    <path d="M4 6 H34" strokeWidth="2" />
    <path d="M0 6 L7 1.5 V10.5Z M38 6 L31 1.5 V10.5Z" fill="#b5b5b7" stroke="none" />
    <rect x="1" y="15" width="36" height="7" fill="#dcdcde" strokeWidth="1" />
    <path d="M5 15 V18 M10 15 V18 M15 15 V18 M20 15 V18 M25 15 V18 M30 15 V18" strokeWidth="1" />
  </Ico>
);

const DimensionIcon = () => (
  <Ico w={38} h={38}>
    <path d="M7 31 L31 7" />
    <path d="M5 33 L8 24 L14 30Z M33 5 L30 14 L24 8Z" fill={DARK} stroke="none" />
    <path d="M0 27 L11 38 M27 0 L38 11" />
  </Ico>
);

const CreateGroupIcon = () => (
  <Ico w={40} h={40}>
    <path d="M7 2 H2 V37 H7 M33 37 H38 V16" strokeWidth="2" />
    <circle cx="16" cy="15" r="9" fill="#eceef0" />
    <path d="M16 19 L19 16 H32 V29 L29 32 H16Z" fill="#eef1f3" strokeLinejoin="round" strokeWidth="2" />
    <path
      d="M32 0 L33.7 4 L37.5 2.5 L36 6.3 L40 8 L36 9.7 L37.5 13.5 L33.7 12 L32 16 L30.3 12 L26.5 13.5 L28 9.7 L24 8 L28 6.3 L26.5 2.5 L30.3 4Z"
      fill="#e2571b"
      stroke="none"
    />
    <circle cx="32" cy="8" r="3.5" fill="#fff3a8" stroke="#f5a21c" />
  </Ico>
);

const CreateSimilarIcon = () => (
  <Ico w={38} h={38} c="#bdbdbf" s={1.3}>
    <rect x="1" y="1" width="8" height="8" />
    <rect x="28" y="1" width="9" height="8" fill="#ececed" />
    <rect x="1" y="28" width="14" height="9" fill="#ececed" />
    <path d="M30 22 L36.5 28.5 L30 35 L23.5 28.5Z" fill="#ececed" />
    <path d="M12 5 H21 M5 13 V21 M14 14 L20 20" strokeWidth="2" />
    <path d="M20 1.5 L26 5 L20 8.5Z M1.5 20 L5 26 L8.5 20Z M22.5 16 V22.5 H16Z" fill="#b2b2b4" stroke="none" />
  </Ico>
);

const LoadIcon = ({ close }: { close?: boolean }) => (
  <Ico w={40} h={38}>
    <path d="M4.5 4.5 H21 V22 H4.5Z" fill="#f0f1f3" />
    <path d="M25 4.5 H35 V35 H4.5 V25 H25Z" fill="#f7f7f8" />
    <path d="M27 6 H33.5 V24 H27Z" fill="#d8dbe0" stroke="none" />
    <path d="M14 0.5 L22 9 H18 V17 H10 V9 H6Z" fill="#2b93ee" stroke="#155fb0" strokeWidth="1.2" />
    {close && (
      <>
        <rect x="25" y="22" width="14.5" height="14.5" rx="2" fill="#d9423b" stroke="#a3201c" />
        <path d="M28.5 25.5 L36 33 M36 25.5 L28.5 33" stroke="#fff" />
      </>
    )}
  </Ico>
);

const GhostR = () => (
  <Ico w={70} h={64} s={0}>
    <defs>
      <linearGradient id="ghost" x1="0" y1="0" x2="1" y2="1">
        <stop offset="0" stopColor="#9b9b9f" />
        <stop offset="1" stopColor="#b9b9bc" />
      </linearGradient>
    </defs>
    <rect x="3" y="5" width="36" height="43" fill="#e1e2e3" />
    <path d="M22 8 H42 C62 8 63 33 48 38 L66 61 H50 L34 42 V61 L22 61Z" fill="url(#ghost)" />
    <path d="M34 19 H40 C48 19 48 29 40 29 H36 C34 26 34 22 34 19Z" fill="#ececed" />
    <path d="M22 38 L34 34 V61 H22Z" fill="#b4b4b7" />
    <path d="M34 34 L48 38 L66 61 L52 59Z" fill="#a3a3a7" />
  </Ico>
);

const EditTypeIcon = () => (
  <Ico w={17} h={17} c="#a9a9ac" s={1.2}>
    <path d="M1 3 L2.5 1 H7 V7 H1Z M9.5 3 L11 1 H15.5 V6 M1 11 L2.5 9.5 H7 V15 H1Z" />
    <rect x="9.5" y="7.5" width="6.5" height="8.5" />
    <path d="M11 10 H14.5 M11 12.5 H14.5" />
  </Ico>
);

const ChevronsUp = () => (
  <Ico w={8} h={10} c="#111" s={1.3}>
    <path d="M1 4.5 L4 1.5 L7 4.5 M1 8.5 L4 5.5 L7 8.5" />
  </Ico>
);

const Chevron = ({ dir, big }: { dir: "up" | "down" | "left" | "right"; big?: boolean }) => {
  const d = { up: "M1.5 8 L6 3.5 L10.5 8", down: "M1.5 4 L6 8.5 L10.5 4", left: "M8 1.5 L3.5 6 L8 10.5", right: "M4 1.5 L8.5 6 L4 10.5" };
  return (
    <Ico w={12} h={12} c={big ? "#4b4b50" : "#55555a"} s={big ? 2 : 1.2}>
      <path d={d[dir]} />
    </Ico>
  );
};

const CloseX = () => (
  <Ico w={11} h={11} c="#111" s={1.8}>
    <path d="M1 1 L10 10 M10 1 L1 10" />
  </Ico>
);

const MdiIcon = ({ kind }: { kind: "min" | "restore" | "close" }) => (
  <Ico w={14} h={14} c="#55565a" s={1.2}>
    {kind === "min" && <rect x="1" y="8" width="12" height="3.5" fill="#fff" />}
    {kind === "restore" && <path d="M4 4 V1.5 H12.5 V10 H10 M2 4 H10 V12.5 H2Z M4.5 6.5 H7.5 V9.5 H4.5Z" />}
    {kind === "close" && <path d="M2 2 H5 L7 4.5 L9 2 H12 L9 7 L12 12 H9 L7 9.5 L5 12 H2 L5 7Z" fill="#fff" />}
  </Ico>
);

const ViewCube = () => (
  <Ico w={80} h={74} c="#9a9b9e" s={1}>
    <ellipse cx="42" cy="65" rx="34" ry="6" fill="#dcdcde" stroke="none" />
    <path d="M11 12 L30 9 L72 10 L61 12Z" fill="#f7f7f8" />
    <path d="M11 12 L61 12 L60 65 L12 60Z" fill="#e6e6e8" />
    <path d="M61 12 L72 10 L71 54 L60 65Z" fill="#efeff1" />
    <rect x="20" y="23" width="30" height="28" fill="#dcdde0" stroke="none" />
    <text x="22" y="46" fill="#858689" stroke="none" fontSize="26" fontFamily='"Noto Sans CJK SC", sans-serif' fontWeight="300">前</text>
    <path d="M65 24 V42 M68 27 L63 31 M63 36 L69 39 M69 24 V30" stroke="#b3b4b7" />
  </Ico>
);

const WheelIcon = () => (
  <Ico w={26} h={26} c="#a2a3a6">
    <path d="M3 5 L6 2 H18 L20 5 V16 L16 20 H8 C0 18 -1 10 3 5Z" fill="#ededee" />
    <circle cx="11" cy="11" r="5" fill="#f7f7f8" />
    <path d="M14 16 L17 14 H25 V22 L22 25 H14Z" fill="#a9c9ec" stroke="#6c96c8" />
    <path d="M14 17 H22 V25 M22 17 L25 14" stroke="#6c96c8" strokeWidth="1" />
  </Ico>
);

const ZoomIcon = () => (
  <Ico w={18} h={18} c="#8f9093">
    <rect x="1" y="1" width="11" height="11" fill="#a9c797" stroke="#83a770" />
    <circle cx="11" cy="11" r="3.5" fill="#eef1f3" />
    <path d="M13.5 13.5 L17 17" strokeWidth="2" />
  </Ico>
);

const NavDot = ({ minus }: { minus?: boolean }) => (
  <Ico w={9} h={9} c="#a5a5a8" s={1.2}>
    <circle cx="4.5" cy="4.5" r="3.6" fill="#dedee0" />
    <path d={minus ? "M2.5 4.5 H6.5" : "M3 3 L6 6 M6 3 L3 6"} />
  </Ico>
);

const DetailIcon = () => (
  <Ico w={20} h={18}>
    <rect x="1" y="2" width="18" height="14" fill="#777b80" />
    <path d="M2 4.5 H7 M13 4.5 H18 M7 9 H13 M2 13.5 H7 M13 13.5 H18" stroke="#eceef0" strokeWidth="3" />
  </Ico>
);

const StyleIcon = () => (
  <Ico w={20} h={18} c={BLUE}>
    <path d="M1.5 6 L6 1.5 H18.5 V11 L14 16.5 H1.5Z" fill="#a8cfec" strokeLinejoin="round" />
    <path d="M1.5 6 H14 V16.5 M14 6 L18.5 1.5" />
    <path d="M4 9.5 H11" stroke="#e03a33" />
    <path d="M4 12.5 H11" stroke="#3fbf4c" strokeWidth="2" />
  </Ico>
);

const CropIcon = ({ show }: { show?: boolean }) => (
  <Ico w={20} h={18}>
    <path d="M0 12 H5 M0 14.5 H5 M14 1 V4 M17 1 V4" />
    <path d="M5 17 V5 H18" stroke="#2474bd" strokeWidth="3.500" />
    <path d="M9 17 V9 H18" stroke="#8f9399" strokeWidth="2" />
    {show ? (
      <>
        <circle cx="16" cy="8" r="3.5" fill="#e4f2fc" stroke="#5c94cc" />
        <path d="M14.5 12 H17.5 V16 H14.5Z" fill="#c9ccd0" />
        <path d="M10 12 H13" stroke="#d1332b" strokeWidth="2" />
      </>
    ) : (
      <path d="M11 9 L19 17 M19 9 L11 17" stroke="#d1332b" strokeWidth="2.6" />
    )}
  </Ico>
);

const LockViewIcon = () => (
  <Ico w={20} h={18}>
    <path d="M2 7 L6 2 L13 1 L18 6 V12 L9 17 L3 15Z" fill="#eceef0" />
    <path d="M0.5 9 L6 3 L10 9 L18 6 M10 9 V16 M5 9 V15" />
    <rect x="10" y="11" width="9" height="6.5" fill="#8fb9b2" stroke="#3f6b66" />
    <path d="M12 11 V8 H17" stroke="#3f6b66" />
  </Ico>
);

const GlassesIcon = () => (
  <Ico w={20} h={18} s={1.3}>
    <path d="M12 3 C17 1 19 3 19 8 M1 5 C3 3 5 4 5 9" />
    <circle cx="7.5" cy="12" r="3.3" fill="#dff0fb" />
    <circle cx="15" cy="10.5" r="3.3" fill="#dff0fb" />
  </Ico>
);

const ConstraintIcon = () => (
  <Ico w={20} h={18} s={1.3}>
    <path d="M1.5 1 V17 M18.5 1 V8 M2 4 H18 M5 2 L2 4 L5 6 M15 2 L18 4 L15 6" />
    <rect x="11" y="11" width="8.5" height="6" fill="#777b80" />
    <path d="M13 11 V8 H17.5 V11" />
  </Ico>
);

const WorksetIcon = () => (
  <Ico w={20} h={18} s={1.3}>
    <rect x="1" y="3" width="18" height="13" fill="#e8eaec" />
    <path d="M2 9 H12 M2 13 H14" stroke="#6d7177" strokeWidth="2" />
    <circle cx="16" cy="7" r="3.5" fill="#cfe4f8" stroke="#5c94cc" />
    <path d="M14.5 11 H17.5 V14 H14.5Z" fill="#f5f5f6" stroke="#8a9bb0" />
  </Ico>
);

const ViewsNodeIcon = () => (
  <Ico w={20} h={20}>
    <path d="M5 1.5 H1.5 V5 M15 1.5 H18.5 V5 M1.5 15 V18.5 H5 M15 18.5 H18.5 V15" />
    <path d="M6 7.5 L8 5 H14 V11 L12 14 H6Z" fill="#f1f2f3" strokeWidth="2" />
  </Ico>
);

const SheetsNodeIcon = () => (
  <Ico w={20} h={20}>
    <path d="M1.5 2 H14 L18.5 6.5 V16.5 H1.5Z" fill="#dcdee1" />
    <path d="M4 6 H12 V14 M4 9 H8.5 V13.5 H4Z M14 2 V16" strokeWidth="1.2" />
  </Ico>
);

const FamilyNodeIcon = () => (
  <Ico w={20} h={20}>
    <rect x="1.5" y="1.5" width="8.5" height="8.5" fill="#e0e2e5" strokeWidth="2" />
    <path d="M12.5 1.5 H18.5 V17.5 H1.5 V12.5 H12.5Z" fill="#f1f2f3" strokeWidth="2" />
  </Ico>
);

const GroupNodeIcon = () => (
  <Ico w={20} h={20}>
    <path d="M5 2 H1.5 V18 H5 M15 2 H18.5 V18 H15" />
    <circle cx="9" cy="8.5" r="5" fill="#d5d8dc" strokeWidth="2" />
    <path d="M8 10 L10 7 H15 V12 L13 15 H8Z" fill="#c3c7cc" />
  </Ico>
);

const LinkNodeIcon = () => (
  <Ico w={20} h={20} c="#c98a10" s={2.2}>
    <rect x="1.5" y="7" width="9" height="6.5" rx="3.2" />
    <rect x="9.5" y="7" width="9" height="6.5" rx="3.2" />
    <path d="M6 10.2 H14" stroke="#e0a92b" />
  </Ico>
);

/* ---------- model view ---------- */

const dimText = { fontFamily: '"Liberation Sans", "Noto Sans CJK SC", sans-serif', fontSize: 26, fontWeight: 300, fill: "#000", stroke: "none" };
const DIM = "窗框宽度 = 50";

const Model = () => (
  <Scene role="img" aria-label="三维视图" stroke="#000" strokeWidth="1">
    <defs>
      <pattern id="grain" width="7" height="5" patternUnits="userSpaceOnUse">
        <rect width="7" height="5" fill="#85858a" stroke="none" />
        <path d="M0 1.5 h1 M2 3.5 h1 M3 0.5 h1 M5 2.5 h1 M6 4.5 h1" stroke="#78787d" />
        <path d="M1 2.5 h1 M3 4.5 h1 M4 1.5 h1 M6 0.5 h1" stroke="#919196" />
      </pattern>
    </defs>
    <g transform="translate(-284 -212)">
      <path d="M415 214 L420 211 H505 L1317 251 L1304 257Z" fill="#4b4b4b" />
      <path d="M1304 257 L1317 251 V930 H1304Z" fill="#4a4a4d" />
      <path d="M414.5 214.5 L1303.5 257.5 V948 L414.5 908.5Z" fill="#313131" />
      <path d="M748.5 392.5 L970.5 403.5 V750 L748.5 739.5Z" fill="#4d4d4d" />
      <path d="M759.5 405 L959.5 414.5 V738 L759.5 728.5Z" fill="url(#grain)" />
      <path d="M773.5 405.5 L959.5 414.5 V730.5 L773.5 722Z" fill="#fcfcfc" />
      <path d="M759.5 728.5 L773.5 722" />
      <path d="M843 398 L850 406 M854 404 H845 L848 412 V416 M854 415 H845 L850 419" fill="none" />
      <path d="M843 734 L848 739 M855 738 H846 L846.5 750 M855 750 H843 L850 754" fill="none" />
      <path d="M945 474 L949 470 L959 472 M955 474 L959 470" fill="none" />
      <path d="M733 586 L738 583 H748 M738 583 V592" fill="none" />
      <g fill="#fcfcfc" stroke="none">
        <path d="M808 327 H838 V490 H808Z M808 722 H838 V826 H808Z" />
        <path d="M960 433 L1036 436 L1034.5 473 L960 470Z" />
        <path d="M662 541 L774 546 V582 L661 577Z" />
      </g>
      <text {...dimText} transform="translate(832 489) rotate(-90)">{DIM}</text>
      <text {...dimText} transform="translate(832 824) rotate(-90)">{DIM}</text>
      <text {...dimText} transform="translate(874 456) rotate(2)">{DIM}</text>
      <text {...dimText} transform="translate(662 568) rotate(2)">{DIM}</text>
    </g>
  </Scene>
);

/* ---------- data ---------- */

const tabs = ["文件", "创建", "插入", "注释", "视图", "管理", "附加模块", "修改"];

type Prop = { name: string; text?: string; off?: boolean };
const groups: { title: string; rows: Prop[] }[] = [
  { title: "约束", rows: [{ name: "主体", text: "墙", off: true }] },
  { title: "标识数据", rows: [{ name: "OmniClass 编号", text: "23.30.20.00" }, { name: "OmniClass 标题", text: "Windows", off: true }] },
  { title: "其他", rows: [{ name: "总是垂直" }, { name: "加载时剪切的空心" }, { name: "共享" }, { name: "房间计算点" }] },
];

type Node = { label: string; g: GuideKind[]; mark?: "+" | "-"; icon?: ReactNode; on?: boolean };
const nodes: Node[] = [
  { label: "视图 (全部)", g: ["start"], mark: "-", icon: <ViewsNodeIcon /> },
  { label: "楼层平面", g: ["line", "tee"], mark: "-" },
  { label: "参照标高", g: ["line", "line", "end"] },
  { label: "天花板平面", g: ["line", "tee"], mark: "-" },
  { label: "参照标高", g: ["line", "line", "end"] },
  { label: "三维视图", g: ["line", "tee"], mark: "+" },
  { label: "立面 (立面 1)", g: ["line", "end"], mark: "-" },
  { label: "内部", g: ["line", "none", "tee"], on: true },
  { label: "右", g: ["line", "none", "tee"] },
  { label: "外部", g: ["line", "none", "tee"] },
  { label: "左", g: ["line", "none", "end"] },
  { label: "图纸 (全部)", g: ["tee"], icon: <SheetsNodeIcon /> },
  { label: "族", g: ["tee"], mark: "+", icon: <FamilyNodeIcon /> },
  { label: "组", g: ["tee"], mark: "+", icon: <GroupNodeIcon /> },
  { label: "Revit 链接", g: ["end"], icon: <LinkNodeIcon /> },
];

const Drop = ({ off }: { off?: boolean }) => (
  <Tool $w={15} aria-label="展开">
    <Caret $color={off ? "#77777a" : undefined} />
  </Tool>
);

const Panel = ({ w, label, line = true, tint, pad, more, children }: { w: number; label: string; line?: boolean; tint?: boolean; pad?: number; more?: boolean; children: ReactNode }) => (
  <PanelBox $w={w} $line={line}>
    <PanelBody $pad={pad}>{children}</PanelBody>
    <PanelLabel $tint={tint}>
      {label}
      {more && <Caret $size={5} />}
    </PanelLabel>
  </PanelBox>
);

const Icons = ({ items, on }: { items: ReactNode[]; on?: number }) => (
  <>
    {items.map((icon, i) => (
      <IconButton key={i} $on={i === on}>{icon}</IconButton>
    ))}
  </>
);

export default function App() {
  const [ticks, setTicks] = useState<Record<string, boolean>>({ 总是垂直: true });

  return (
    <Window>
      <GlobalStyle />
      <TitleBar>
        <Tool $w={36}><LogoR /></Tool>
        <Tool><OpenIcon /></Tool>
        <Tool><SaveIcon /></Tool>
        <Tool><SyncIcon /></Tool>
        <Drop />
        <Tool><UndoIcon /></Tool>
        <Drop />
        <Tool><UndoIcon flip /></Tool>
        <Drop off />
        <Tool><PrintIcon /></Tool>
        <Divider />
        <Tool><RulerIcon /></Tool>
        <Drop />
        <Tool><DimIcon /></Tool>
        <Tool><TagIcon /></Tool>
        <Tool><LetterA>A</LetterA></Tool>
        <Divider />
        <Tool><HouseIcon /></Tool>
        <Drop />
        <Tool><SectionIcon /></Tool>
        <Tool $on><ThinLinesIcon /></Tool>
        <Divider />
        <Tool><CloseWindowsIcon /></Tool>
        <Tool><SwitchWindowsIcon /></Tool>
        <Drop />
        <Tool><EditPlaneIcon /></Tool>
        <Tool $w={18}><CustomiseIcon /></Tool>
        <DocTitle>
          <ProductName>Autodesk Revit 2018 -</ProductName>
          {"     族1 - 三维视图: {三维}"}
        </DocTitle>
        <Tool $w={18} aria-label="搜索">
          <Ico w={6} h={10} s={0}><path d="M0 0 L5 5 L0 10Z" fill="#333" /></Ico>
        </Tool>
        <Search placeholder="键入关键字或短语" aria-label="键入关键字或短语" />
        <Tool><BinocularIcon /></Tool>
        <Tool><DishIcon /></Tool>
        <Tool><StarIcon /></Tool>
        <Tool><UserIcon /></Tool>
        <Login>登录<Caret /></Login>
        <Tool $w={34}><ExchangeIcon /></Tool>
        <Divider />
        <Tool $w={34}><HelpIcon /></Tool>
        <Drop />
        <MinimizeTool $w={65} aria-label="最小化">
          <Ico w={12} h={12} c="#222" s={3}><path d="M0 9.5 H11" /></Ico>
        </MinimizeTool>
        <Tool $w={6} aria-label="最大化">
          <Ico w={12} h={14} c="#222" s={1}><path d="M12 2 H0.5 V13.5 H12" /><path d="M0 1.5 H12" strokeWidth="3" /></Ico>
        </Tool>
      </TitleBar>

      <TabBar>
        {tabs.map((t, i) => (
          <Tab key={t} $file={i === 0} $active={i === 7}>{t}</Tab>
        ))}
        <TabTools aria-label="最小化功能区">
          <Ico w={20} h={12}>
            <rect x="1" y="1" width="18" height="10" rx="2" fill="#f4f4f4" />
            <path d="M7 8 H13 L10 4.5Z" fill={DARK} stroke="none" />
          </Ico>
          <Caret />
        </TabTools>
      </TabBar>

      <Ribbon>
        <Panel w={64} label="选择" pad={9} more>
          <TallButton $w={47} $on><TallIcon><PointerIcon /></TallIcon>修改</TallButton>
        </Panel>
        <Panel w={104} label="属性">
          <BigGrid $cols={2}>
            <Icons on={2} items={[<TypesOffIcon />, <FamilyCategoryIcon />, <PropertiesIcon />, <FamilyTypesIcon />]} />
          </BigGrid>
        </Panel>
        <Panel w={95} label="剪贴板">
          <TallButton $w={56} $off><TallIcon><PasteIcon /></TallIcon>粘贴<Caret $color="#98989b" /></TallButton>
          <SmallGrid $cols={1} $left={2}>
            <Icons items={[<ScissorsIcon />, <CopyClipIcon />, <MatchIcon />]} />
          </SmallGrid>
        </Panel>
        <Panel w={139} label="几何图形" pad={6}>
          <GeometryRows>
            <GeometryRow>
              <TextTool><CutIcon />剪切</TextTool>
              <Tool $w={12}><Caret /></Tool>
              <Tool $w={36}><WallJoinIcon /></Tool>
            </GeometryRow>
            <GeometryRow>
              <TextTool><JoinIcon />连接</TextTool>
              <Tool $w={12}><Caret /></Tool>
              <Tool $w={36}><PaintIcon /></Tool>
              <Tool $w={12}><Caret /></Tool>
            </GeometryRow>
          </GeometryRows>
        </Panel>
        <Panel w={299} label="修改">
          <BigGrid $cols={4} $gap={4}>
            <Icons items={[<AlignIcon />, <OffsetIcon />, <MirrorPickIcon />, <MirrorDrawIcon />, <MoveIcon />, <CopyIcon />, <RotateIcon />, <TrimIcon />]} />
          </BigGrid>
          <SmallGrid $cols={3} $left={3}>
            <Icons items={[<SplitIcon />, <SplitIcon gap />, <PinIcon off />, <ArrayIcon />, <ScaleIcon />, <PinIcon />, <ExtendIcon />, <ExtendIcon many />, <DeleteIcon />]} />
          </SmallGrid>
        </Panel>
        <Panel w={70} label="测量">
          <BigGrid $cols={1}>
            <Icons items={[<MeasureOffIcon />, <DimensionIcon />]} />
          </BigGrid>
          <CaretColumn>
            <Icons items={[<Caret $color="#77777a" />, <Caret />]} />
          </CaretColumn>
        </Panel>
        <Panel w={56} label="创建" line={false}>
          <BigGrid $cols={1}>
            <Icons items={[<CreateGroupIcon />, <CreateSimilarIcon />]} />
          </BigGrid>
        </Panel>
        <Panel w={136} label="族编辑器" line={false} tint pad={0}>
          <TallButton $w={54}><TallIcon><LoadIcon /></TallIcon>载入到<br />项目</TallButton>
          <TallButton $w={78}><TallIcon><LoadIcon close /></TallIcon>载入到<br />项目并关闭</TallButton>
        </Panel>
      </Ribbon>

      <Work>
        <Palette $w={276}>
          <PaletteTitle>
            属性
            <button aria-label="关闭"><CloseX /></button>
          </PaletteTitle>
          <PaletteBody>
            <TypePreview aria-label="类型选择器">
              <Thumb><GhostR /></Thumb>
              <Caret $size={4} $color="#98989b" />
            </TypePreview>
            <TypeRow>
              <SelectWrap>
                <TypeSelect aria-label="类型过滤器" defaultValue="族: 窗">
                  <option>族: 窗</option>
                </TypeSelect>
                <Chevron dir="down" />
              </SelectWrap>
              <EditType><EditTypeIcon />编辑类型</EditType>
            </TypeRow>
            <PropTable>
              <colgroup>
                <col style={{ width: 136 }} />
                <col />
              </colgroup>
              {groups.map((g) => (
                <tbody key={g.title}>
                  <tr>
                    <GroupCell colSpan={2}><GroupButton>{g.title}<ChevronsUp /></GroupButton></GroupCell>
                  </tr>
                  {g.rows.map((r) => (
                    <tr key={r.name}>
                      <NameCell $off={r.off} scope="row"><label htmlFor={r.name}>{r.name}</label></NameCell>
                      <ValueCell $off={r.off}>
                        {r.text !== undefined ? (
                          <ValueInput id={r.name} defaultValue={r.text} readOnly={r.off} $boxed={!r.off} />
                        ) : (
                          <Tick
                            id={r.name}
                            type="checkbox"
                            checked={!!ticks[r.name]}
                            onChange={(e) => setTicks({ ...ticks, [r.name]: e.target.checked })}
                          />
                        )}
                      </ValueCell>
                    </tr>
                  ))}
                </tbody>
              ))}
            </PropTable>
            <PaletteFooter>
              <HelpLink href="#help">属性帮助</HelpLink>
              <Apply>应用</Apply>
            </PaletteFooter>
          </PaletteBody>
        </Palette>

        <ViewFrame>
          <Canvas>
            <Model />
            <ViewButtons>
              <button aria-label="最小化"><MdiIcon kind="min" /></button>
              <button aria-label="还原"><MdiIcon kind="restore" /></button>
              <button aria-label="关闭"><MdiIcon kind="close" /></button>
            </ViewButtons>
            <CubeSpot aria-label="ViewCube"><ViewCube /></CubeSpot>
            <NavBar>
              <NavCorner aria-label="关闭"><NavDot /></NavCorner>
              <NavTool $line aria-label="控制盘"><WheelIcon /><Caret $color="#98989b" /></NavTool>
              <NavTool aria-label="缩放"><ZoomIcon /><Caret $color="#98989b" /></NavTool>
              <NavCorner aria-label="选项"><NavDot minus /></NavCorner>
            </NavBar>
          </Canvas>
          <ScrollColumn>
            <Chevron dir="up" big />
            <Thumbpad />
            <Chevron dir="down" big />
          </ScrollColumn>
          <StatusBar>
            <Scale>1 : 20</Scale>
            {[<DetailIcon />, <StyleIcon />, <CropIcon />, <CropIcon show />, <LockViewIcon />, <GlassesIcon />, <ConstraintIcon />, <WorksetIcon />].map((icon, i) => (
              <StatusTool key={i}>{icon}</StatusTool>
            ))}
            <ScrollRow>
              <Chevron dir="left" big />
              <Thumbpad />
              <Chevron dir="right" big />
            </ScrollRow>
          </StatusBar>
          <Grip>
            <Ico w={12} h={12} s={0}>
              <path d="M9 0 h3 v3 h-3Z M4.5 4.5 h3 v3 h-3Z M9 4.5 h3 v3 h-3Z M0 9 h3 v3 h-3Z M4.5 9 h3 v3 h-3Z M9 9 h3 v3 h-3Z" fill="#b9b8bc" />
            </Ico>
          </Grip>
        </ViewFrame>

        <Palette $w={215}>
          <PaletteTitle>项目浏览器 - 族1</PaletteTitle>
          <PaletteBody>
            <Tree>
              {nodes.map((n, i) => (
                <TreeRow key={i}>
                  {n.g.map((k, j) => (
                    <Guide key={j} $kind={k}>
                      {n.mark && j === n.g.length - 1 && (
                        <Expander aria-label={n.mark === "+" ? "展开" : "折叠"}>
                          <Ico w={9} h={9} c="#2b4f9c" s={1}>
                            <path d={n.mark === "+" ? "M0 4.5 H9 M4.5 0 V9" : "M0 4.5 H9"} />
                          </Ico>
                        </Expander>
                      )}
                    </Guide>
                  ))}
                  {n.icon}
                  <TreeLabel href="#node" $on={n.on}>{n.label}</TreeLabel>
                </TreeRow>
              ))}
            </Tree>
          </PaletteBody>
        </Palette>
      </Work>
    </Window>
  );
}
